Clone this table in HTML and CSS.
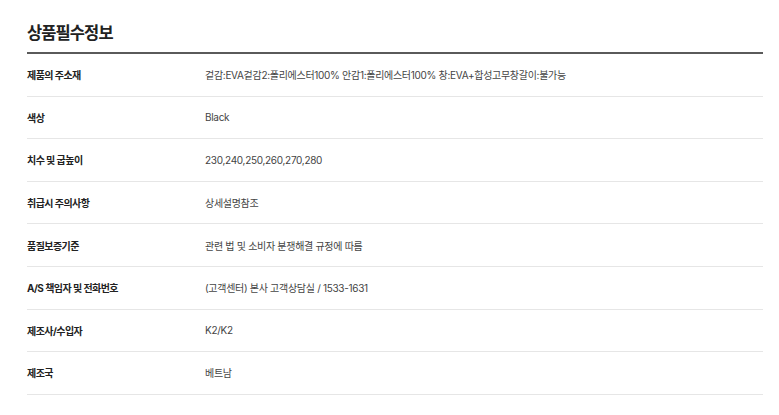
FILE: index.html
```html
<!DOCTYPE html>
<html lang="ko">
<head>
<meta charset="utf-8">
<link rel="stylesheet" href="styles.css">
</head>
<body>
<section class="info">
  <h2 class="title">상품필수정보</h2>
  <div class="table">
    <div class="row"><div class="label">제품의 주소재</div><div class="value">겉감:EVA겉감2:폴리에스터100% 안감1:폴리에스터100% 창:EVA+합성고무창갈이:불가능</div></div>
    <div class="row"><div class="label">색상</div><div class="value">Black</div></div>
    <div class="row"><div class="label">치수 및 굽높이</div><div class="value">230,240,250,260,270,280</div></div>
    <div class="row"><div class="label">취급시 주의사항</div><div class="value">상세설명참조</div></div>
    <div class="row"><div class="label">품질보증기준</div><div class="value">관련 법 및 소비자 분쟁해결 규정에 따름</div></div>
    <div class="row"><div class="label">A/S 책임자 및 전화번호</div><div class="value">(고객센터) 본사 고객상담실 / 1533-1631</div></div>
    <div class="row"><div class="label">제조사/수입자</div><div class="value">K2/K2</div></div>
    <div class="row"><div class="label">제조국</div><div class="value">베트남</div></div>
  </div>
</section>
</body>
</html>
```

FILE: styles.css
```css
html, body {
  margin: 0;
  padding: 0;
  background: #ffffff;
}
body {
  font-family: Inter, "Noto Sans CJK KR", sans-serif;
  color: #222222;
}
.info {
  width: 736px;
  margin-left: 27px;
  padding-top: 22px;
}
.title {
  margin: 0;
  height: 30px;
  line-height: 22px;
  font-size: 16.5px;
  font-weight: 700;
  letter-spacing: -0.9px;
  color: #222222;
}
.table {
  border-top: 2px solid #5a5a5a;
}
.row {
  display: flex;
  align-items: center;
  height: 41.6px;
  border-bottom: 1px solid #e6e6e6;
}
.label {
  width: 178px;
  flex: none;
  font-size: 10px;
  font-weight: 700;
  letter-spacing: -0.55px;
  color: #222222;
}
.value {
  font-size: 10px;
  letter-spacing: -0.3px;
  color: #444444;
}
```
